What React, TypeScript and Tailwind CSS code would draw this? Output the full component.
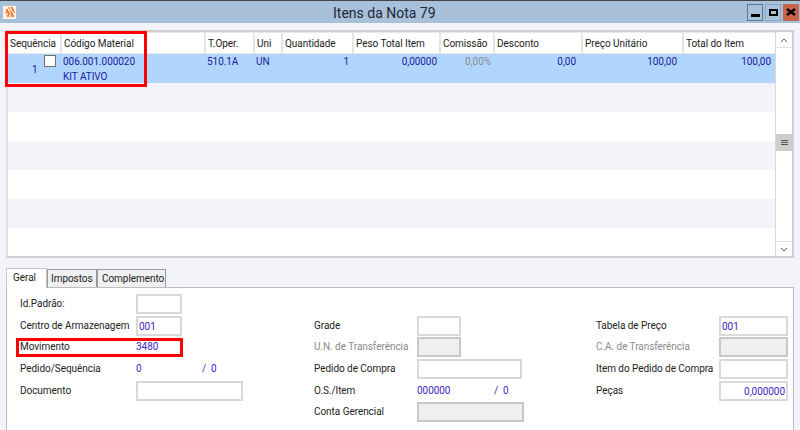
const columns = [
  { label: "Sequência", width: "w-[54px]" },
  { label: "Código Material", width: "w-[144px]" },
  { label: "T.Oper.", width: "w-[49px]" },
  { label: "Uni", width: "w-[28px]" },
  { label: "Quantidade", width: "w-[71px]" },
  { label: "Peso Total Item", width: "w-[87px]" },
  { label: "Comissão", width: "w-[54px]" },
  { label: "Desconto", width: "w-[88px]" },
  { label: "Preço Unitário", width: "w-[101px]" },
  { label: "Total do Item", width: "w-[94px]" },
];

function TitleIcon() {
  // blotchy orange logo
  const cells = [
    [3, 0, "#f6a566"], [6, 0, "#f08030"], [1, 2, "#f08030"], [4, 2, "#f9c9a0"], [7, 2, "#ee7422"],
    [0, 4, "#f6a566"], [2, 4, "#ee7422"], [5, 4, "#f08030"], [8, 4, "#f6a566"], [1, 6, "#f9c9a0"],
    [3, 6, "#f08030"], [6, 6, "#ee7422"], [2, 8, "#f08030"], [5, 8, "#f6a566"], [7, 8, "#f08030"],
  ] as const;
  return (
    <div className="flex h-[13px] w-[13px] items-center justify-center bg-[#fdf3ea]">
      <svg width="10" height="10" viewBox="0 0 10 10">
        {cells.map(([x, y, c], i) => (
          <rect key={i} x={x} y={y} width="2" height="2" fill={c} />
        ))}
      </svg>
    </div>
  );
}

function WindowButtons() {
  return (
    <div className="flex items-center gap-[2px]">
      <div className="flex h-[17px] w-[16px] items-end justify-center border border-[#5f7690] bg-[#a9c2dc] pb-[3px]">
        <div className="h-[3px] w-[9px] bg-black" />
      </div>
      <div className="flex h-[17px] w-[16px] items-center justify-center border border-[#8ea8c4] bg-[#a9c2dc]">
        <div className="h-[7px] w-[9px] border-2 border-black" />
      </div>
      <div className="flex h-[17px] w-[16px] items-center justify-center bg-[#c9634a]">
        <svg width="10" height="8" viewBox="0 0 10 8">
          <path d="M1 1 L9 7 M9 1 L1 7" stroke="#000" strokeWidth="2.4" />
        </svg>
      </div>
    </div>
  );
}

function Scrollbar() {
  return (
    <div className="flex w-[17px] flex-col border-l border-[#d8d8d8] bg-white">
      <div className="mt-px flex h-[15px] items-center justify-center border-b border-[#e2e2e2]">
        <svg width="8" height="5" viewBox="0 0 8 5">
          <path d="M1 4 L4 1 L7 4" fill="none" stroke="#606060" strokeWidth="1" />
        </svg>
      </div>
      <div className="flex flex-1 flex-col pt-[86px]">
        <div className="flex h-[17px] flex-col items-center justify-center gap-[1px] bg-[#cdcdcd]">
          <div className="h-px w-[7px] bg-[#555]" />
          <div className="h-px w-[7px] bg-[#555]" />
          <div className="h-px w-[7px] bg-[#555]" />
        </div>
      </div>
      <div className="flex h-[15px] items-center justify-center border-t border-[#e2e2e2]">
        <svg width="8" height="5" viewBox="0 0 8 5">
          <path d="M1 1 L4 4 L7 1" fill="none" stroke="#606060" strokeWidth="1" />
        </svg>
      </div>
    </div>
  );
}

function Grid() {
  const stripes = ["bg-[#f3f4fa]", "bg-white", "bg-[#f3f4fa]", "bg-white", "bg-[#f3f4fa]", "bg-white"];
  return (
    <div className="mx-[6px] mt-[7px] flex h-[228px] border-2 border-[#cfcfcf] border-l-[#e0e0e0] bg-white">
      <div className="flex min-w-0 flex-1 flex-col overflow-hidden">
        <div className="flex h-[22px] shrink-0 bg-[#e9e9e9] py-px">
          {columns.map((c) => (
            <div key={c.label} className={`${c.width} shrink-0 whitespace-nowrap border-r-2 border-[#e4e4e4] bg-white pl-[2px] pt-[4px] text-[#222]`}>
              {c.label}
            </div>
          ))}
        </div>
        <div className="flex h-[29px] shrink-0 bg-[#b0d6ff] text-[#1a1a9c]">
          <div className="relative w-[54px] shrink-0">
            <span className="absolute left-[24px] top-[9px]">1</span>
            <div className="absolute left-[36px] top-px h-[12px] w-[12px] border border-[#707070] bg-white" />
          </div>
          <div className="w-[144px] shrink-0 pl-px leading-[14px]">
            <div className="pt-px">006.001.000020</div>
            <div className="pt-px">KIT ATIVO</div>
          </div>
          <div className="w-[49px] shrink-0 pl-px pt-px">510.1A</div>
          <div className="w-[28px] shrink-0 pl-px pt-px">UN</div>
          <div className="w-[71px] shrink-0 pr-[5px] pt-px text-right">1</div>
          <div className="w-[87px] shrink-0 pr-[4px] pt-px text-right">0,00000</div>
          <div className="w-[54px] shrink-0 pr-[4px] pt-px text-right text-[#8a8a8a]">0,00%</div>
          <div className="w-[88px] shrink-0 pr-[7px] pt-px text-right">0,00</div>
          <div className="w-[101px] shrink-0 pr-[7px] pt-px text-right">100,00</div>
          <div className="w-[94px] shrink-0 pr-[7px] pt-px text-right">100,00</div>
        </div>
        {stripes.map((s, i) => (
          <div key={i} className={`h-[29px] shrink-0 ${s}`} />
        ))}
      </div>
      <Scrollbar />
    </div>
  );
}

function Input({ value, width, disabled, right }: { value?: string; width: string; disabled?: boolean; right?: boolean }) {
  return (
    <div
      className={`h-[20px] ${width} border-2 px-px pt-[2px] text-[#3b1fc4] ${disabled ? "border-[#c8c8c8] bg-[#efefef]" : "border-[#d9d9d9] bg-white"} ${right ? "text-right" : ""}`}
    >
      {value}
    </div>
  );
}

function Row({ label, labelWidth, muted, children }: { label: string; labelWidth: string; muted?: boolean; children?: React.ReactNode }) {
  return (
    <div className="flex h-[21.7px] items-start">
      <div className={`${labelWidth} shrink-0 whitespace-nowrap pt-[3px] ${muted ? "text-[#8a8a8a]" : "text-[#222]"}`}>{label}</div>
      {children}
    </div>
  );
}

function ValuePair({ first, second, gap }: { first: string; second: string; gap: string }) {
  return (
    <div className={`flex pt-[3px] text-[#3b1fc4] ${gap}`}>
      <span className="w-[1px] whitespace-nowrap">{first}</span>
      <span className="whitespace-nowrap">/ &nbsp;{second}</span>
    </div>
  );
}

function Tabs() {
  return (
    <div className="mx-[6px] mt-[8px] flex h-[21px] items-end">
      <div className="z-10 mb-[-1px] h-[20px] w-[41px] border border-b-0 border-[#c4c4c4] bg-white pl-[6px] pt-[2px] text-[#222]">Geral</div>
      <div className="h-[18px] w-[50px] border border-b-0 border-[#9a9a9a] bg-[#f0f0f0] pl-[3px] pt-[2px] text-[#222]">Impostos</div>
      <div className="h-[18px] w-[69px] border border-b-0 border-[#9a9a9a] bg-[#f0f0f0] pl-[4px] pt-[2px] text-[#222]">Complemento</div>
    </div>
  );
}

export default function App() {
  return (
    <div className="relative h-[430px] w-[800px] overflow-hidden border-t border-[#444] bg-[#f3f4fa] font-['Roboto',sans-serif] text-[10px] leading-[14px] tracking-[-0.05px]">
      <header className="relative flex h-[22px] items-center justify-between bg-[#a8c0da] pl-[3px] pr-px">
        <TitleIcon />
        <span className="absolute left-[333px] top-[3px] text-[14px] leading-[18px] tracking-normal text-[#1c2733]">
          Itens da Nota 79
        </span>
        <WindowButtons />
      </header>
      <Grid />

      <Tabs />
      <div className="mx-[6px] flex h-[143px] border border-b-0 border-[#bdbdbd] bg-white pl-[13px] pt-[6px]">
        <div className="w-[294px] shrink-0">
          <Row label="Id.Padrão:" labelWidth="w-[116px]"><Input width="w-[46px]" /></Row>
          <Row label="Centro de Armazenagem" labelWidth="w-[116px]"><Input width="w-[46px]" value="001" /></Row>
          <Row label="Movimento" labelWidth="w-[116px]"><span className="pt-[3px] text-[#3b1fc4]">3480</span></Row>
          <Row label="Pedido/Sequência" labelWidth="w-[116px]"><ValuePair first="0" second="0" gap="gap-[65px]" /></Row>
          <Row label="Documento" labelWidth="w-[116px]"><Input width="w-[107px]" /></Row>
        </div>
        <div className="w-[282px] shrink-0 pt-[21.7px]">
          <Row label="Grade" labelWidth="w-[103px]"><Input width="w-[44px]" /></Row>
          <Row label="U.N. de Transferência" labelWidth="w-[103px]" muted><Input width="w-[44px]" disabled /></Row>
          <Row label="Pedido de Compra" labelWidth="w-[103px]"><Input width="w-[105px]" /></Row>
          <Row label="O.S./Item" labelWidth="w-[103px]"><ValuePair first="000000" second="0" gap="gap-[76px]" /></Row>
          <Row label="Conta Gerencial" labelWidth="w-[103px]"><Input width="w-[107px]" disabled /></Row>
        </div>
        <div className="pt-[21.7px]">
          <Row label="Tabela de Preço" labelWidth="w-[123px]"><Input width="w-[69px]" value="001" /></Row>
          <Row label="C.A. de Transferência" labelWidth="w-[123px]" muted><Input width="w-[69px]" disabled /></Row>
          <Row label="Item do Pedido de Compra" labelWidth="w-[123px]"><Input width="w-[69px]" /></Row>
          <Row label="Peças" labelWidth="w-[123px]"><Input width="w-[69px]" value="0,000000" right /></Row>
        </div>
      </div>

      {/* red marks drawn over the screenshot */}
      <div className="absolute left-[5px] top-[30px] h-[56px] w-[142px] border-[3px] border-[#ff0000]" />
      <div className="absolute left-[16px] top-[337px] h-[19px] w-[167px] border-[3px] border-[#ff0000]" />
    </div>
  );
}
